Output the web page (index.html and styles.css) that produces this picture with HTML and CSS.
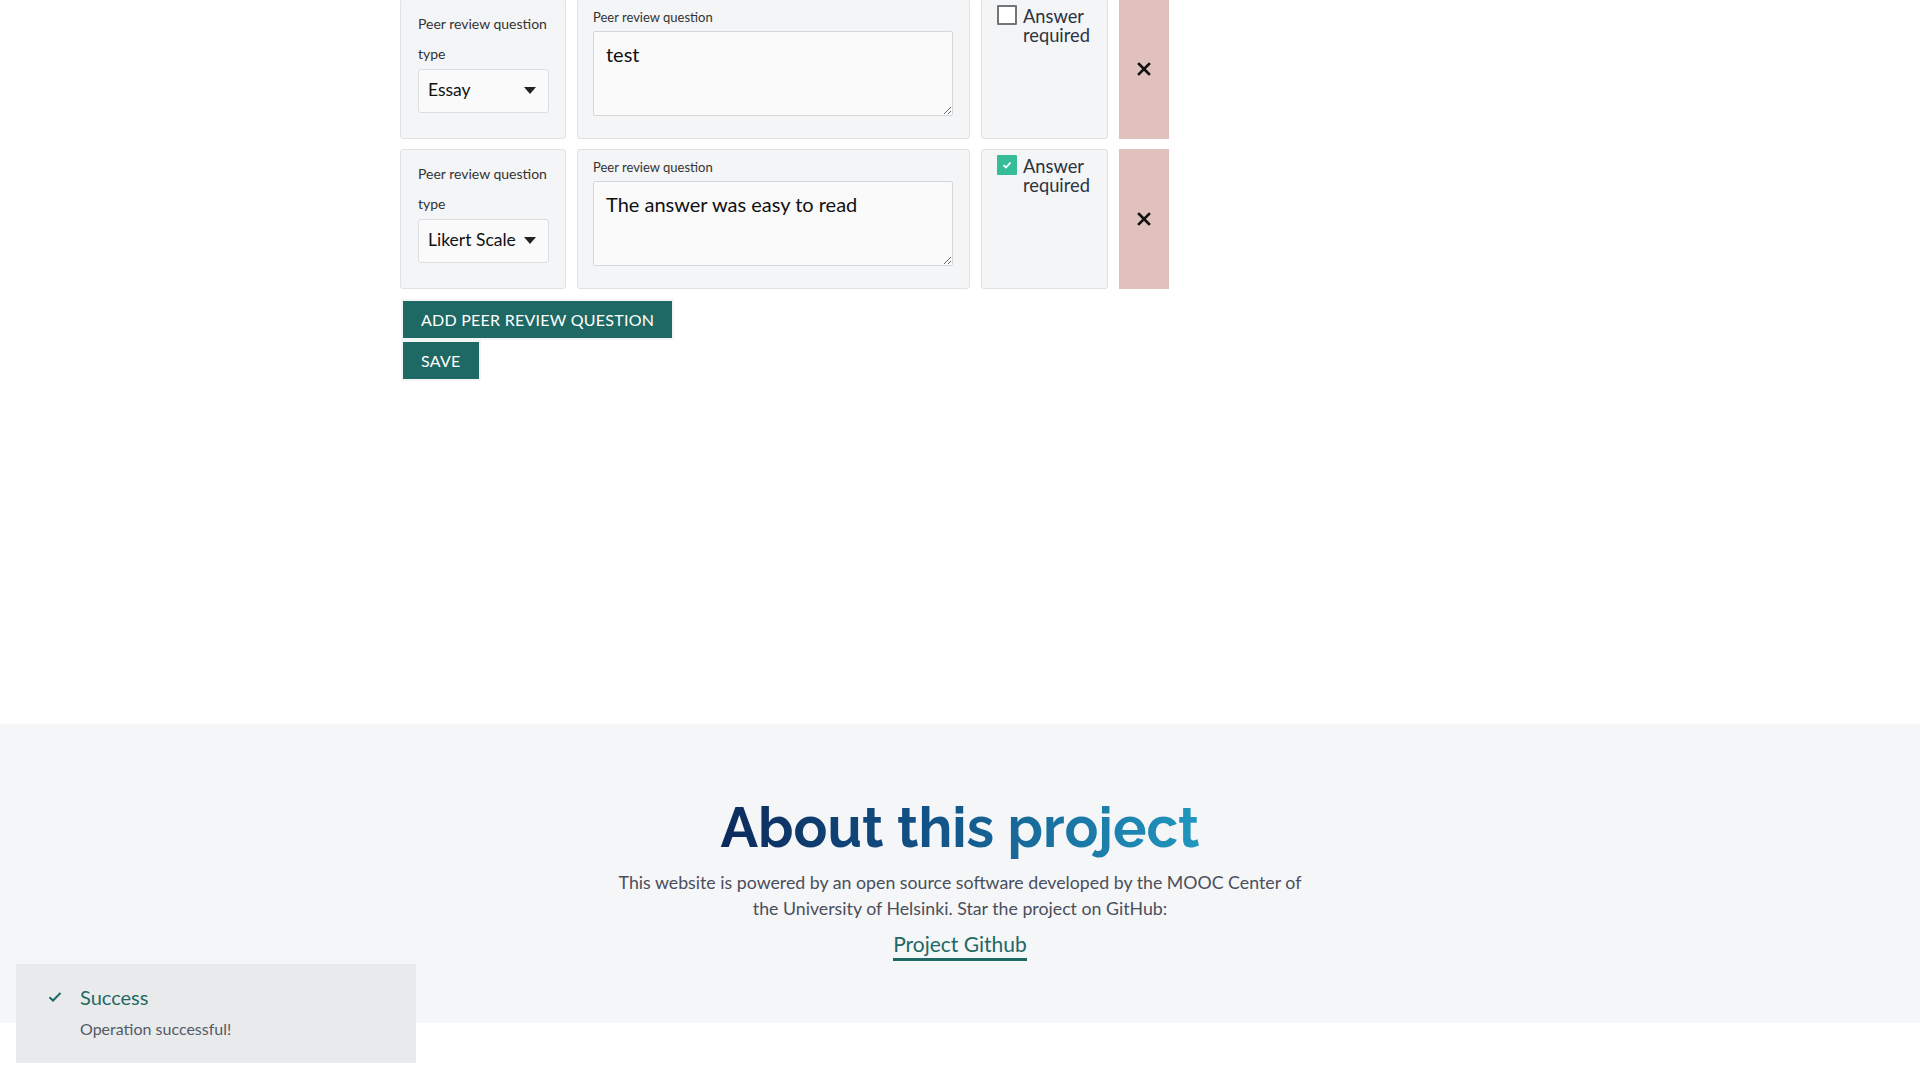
FILE: index.html
```html
<!DOCTYPE html>
<html lang="en">
<head>
<meta charset="utf-8">
<title>Peer review questions</title>
<link rel="stylesheet" href="styles.css">
</head>
<body>
<main class="container">
  <div class="qrow first">
    <div class="card type-card">
      <label class="small-label">Peer review question type</label>
      <div class="select"><span>Essay</span><span class="caret"></span></div>
    </div>
    <div class="card text-card">
      <label class="tiny-label">Peer review question</label>
      <textarea class="area">test</textarea>
    </div>
    <div class="card check-card">
      <span class="checkbox"></span>
      <span class="check-text">Answer required</span>
    </div>
    <button class="remove" aria-label="Remove">
      <svg width="14" height="14" viewBox="0 0 14 14"><path d="M2 2 L12 12 M12 2 L2 12" stroke="#111" stroke-width="2.6" stroke-linecap="square"/></svg>
    </button>
  </div>
  <div class="qrow">
    <div class="card type-card">
      <label class="small-label">Peer review question type</label>
      <div class="select"><span>Likert Scale</span><span class="caret"></span></div>
    </div>
    <div class="card text-card">
      <label class="tiny-label">Peer review question</label>
      <textarea class="area">The answer was easy to read</textarea>
    </div>
    <div class="card check-card">
      <span class="checkbox checked">
        <svg width="10" height="8" viewBox="0 0 10 8"><path d="M1.5 4.2 L4 6.5 L8.5 1.5" fill="none" stroke="#fff" stroke-width="1.8"/></svg>
      </span>
      <span class="check-text">Answer required</span>
    </div>
    <button class="remove" aria-label="Remove">
      <svg width="14" height="14" viewBox="0 0 14 14"><path d="M2 2 L12 12 M12 2 L2 12" stroke="#111" stroke-width="2.6" stroke-linecap="square"/></svg>
    </button>
  </div>
  <div class="actions">
    <button class="btn">Add peer review question</button>
    <button class="btn">Save</button>
  </div>
</main>

<footer class="footer">
  <h2 class="about-title">About this project</h2>
  <p class="about-text">This website is powered by an open source software developed by the MOOC Center of the University of Helsinki. Star the project on GitHub:</p>
  <a class="gh-link" href="#">Project Github</a>
</footer>

<div class="toast">
  <div class="toast-head">
    <svg class="toast-icon" width="14" height="12" viewBox="0 0 14 12"><path d="M1.5 6.2 L5 9.5 L12.5 2" fill="none" stroke="#1f6964" stroke-width="2"/></svg>
    <span class="toast-title">Success</span>
  </div>
  <div class="toast-msg">Operation successful!</div>
</div>
</body>
</html>
```
FILE: styles.css
```css
* { box-sizing: border-box; }
html, body { margin: 0; padding: 0; }
body {
  font-family: Lato, "Open Sans", "Liberation Sans", sans-serif;
  color: #1a1a1a;
  background: #fff;
}
.container {
  width: 1120px;
  margin: 0 auto;
}
.qrow {
  display: flex;
  gap: 11px;
  height: 140px;
  margin-bottom: 10px;
}
.qrow.first { margin-top: -1px; }
.card {
  background: #f4f5f7;
  border: 1px solid #dfe1e4;
  border-radius: 3px;
}
.type-card {
  width: 166px;
  padding: 9px 16px 0 17px;
}
.small-label {
  display: block;
  font-size: 14px;
  line-height: 30px;
  color: #333;
}
.select {
  width: 131px;
  height: 44px;
  background: #fafafa;
  border: 1px solid #dcdde0;
  border-radius: 3px;
  display: flex;
  align-items: center;
  justify-content: space-between;
  padding: 0 12px 4px 9px;
  font-size: 17.5px;
  color: #111;
}
.caret {
  width: 0; height: 0;
  border-left: 6px solid transparent;
  border-right: 6px solid transparent;
  border-top: 7px solid #222;
  margin-top: 3px;
}
.text-card {
  width: 393px;
  padding: 7px 16px 0 15px;
}
.tiny-label {
  display: block;
  font-size: 13px;
  line-height: 20px;
  color: #333;
}
.area {
  display: block;
  margin-top: 4px;
  width: 360px;
  height: 85px;
  background: #fafafa;
  border: 1px solid #d6d7d9;
  border-radius: 2px;
  padding: 10px 12px;
  font-family: Lato, "Open Sans", sans-serif;
  font-size: 20px;
  line-height: 24px;
  color: #111;
  resize: vertical;
}
.check-card {
  width: 127px;
  display: flex;
  align-items: flex-start;
  padding: 5px 8px 0 15px;
  gap: 6px;
}
.checkbox {
  flex: none;
  width: 20px;
  height: 20px;
  border: 2px solid #757575;
  border-radius: 1px;
  background: #fff;
  display: flex;
  align-items: center;
  justify-content: center;
}
.checkbox.checked {
  background: #35bd97;
  border-color: #35bd97;
}
.check-text {
  font-size: 18.3px;
  line-height: 19px;
  color: #2c3340;
  padding-top: 2px;
}
.remove {
  width: 50px;
  border: none;
  background: #e0c1bc;
  display: flex;
  align-items: center;
  justify-content: center;
  padding: 0;
  cursor: pointer;
}
.actions {
  display: flex;
  flex-direction: column;
  align-items: flex-start;
  gap: 4px;
  margin-top: 12px;
  padding-left: 3px;
}
.btn {
  background: #1f6964;
  color: #fff;
  border: none;
  height: 37px;
  padding: 0 18px;
  font-family: Lato, "Open Sans", sans-serif;
  font-size: 16px;
  text-transform: uppercase;
  letter-spacing: 0.25px;
  box-shadow: 0 0 0 2px #f3f4f4;
  cursor: pointer;
}
.footer {
  margin-top: 345px;
  height: 299px;
  background: #f5f6f8;
  text-align: center;
  padding-top: 70px;
}
.about-title {
  margin: 0;
  font-family: Raleway, Lato, "Open Sans", sans-serif;
  font-weight: 700;
  font-size: 56px;
  line-height: 66px;
  display: inline-block;
  background: linear-gradient(90deg, #0c2a5c 0%, #135488 45%, #2197bf 100%);
  -webkit-background-clip: text;
  background-clip: text;
  color: transparent;
}
.about-text {
  margin: 10px auto 0;
  width: 700px;
  font-size: 17.75px;
  line-height: 25.5px;
  color: #4a4f5b;
}
.gh-link {
  display: inline-block;
  margin-top: 11px;
  font-size: 21px;
  line-height: 24px;
  letter-spacing: 0;
  color: #1f6964;
  text-decoration: none;
  border-bottom: 3px solid #1f6964;
  padding-bottom: 2px;
}
.toast {
  position: fixed;
  left: 16px;
  bottom: 17px;
  width: 400px;
  height: 99px;
  background: #e9eaec;
  padding: 20px 0 0 32px;
}
.toast-head {
  display: flex;
  align-items: center;
  gap: 18px;
}
.toast-icon { flex: none; }
.toast-title {
  font-size: 20px;
  line-height: 26px;
  color: #1f6964;
}
.toast-msg {
  margin-top: 8px;
  padding-left: 32px;
  font-size: 16px;
  line-height: 22px;
  color: #535a66;
}
```
